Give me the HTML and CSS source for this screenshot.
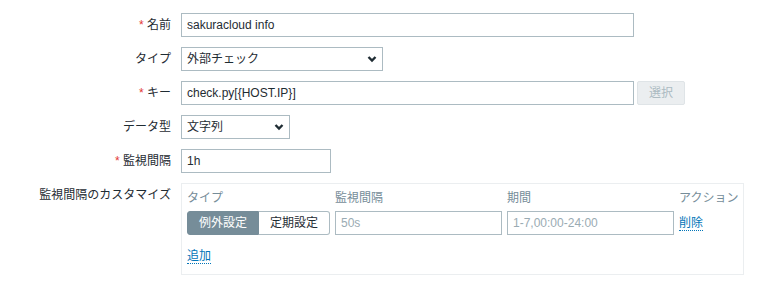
FILE: index.html
```html
<!DOCTYPE html>
<html lang="ja">
<head>
<meta charset="utf-8">
<link rel="stylesheet" href="styles.css">
</head>
<body>
<form class="form">
  <label class="label"><span class="ast">*</span> 名前</label>
  <div class="field"><div class="input w-full">sakuracloud info</div></div>

  <label class="label">タイプ</label>
  <div class="field"><div class="select w-type">外部チェック<svg class="chev" viewBox="0 0 10 8" width="10" height="8"><path d="M1.5 2 L5 5.5 L8.5 2" fill="none" stroke="#1f2c33" stroke-width="2.4"/></svg></div></div>

  <label class="label"><span class="ast">*</span> キー</label>
  <div class="field row"><div class="input w-full">check.py[{HOST.IP}]</div><button type="button" class="btn-disabled">選択</button></div>

  <label class="label">データ型</label>
  <div class="field"><div class="select w-dtype">文字列<svg class="chev" viewBox="0 0 10 8" width="10" height="8"><path d="M1.5 2 L5 5.5 L8.5 2" fill="none" stroke="#1f2c33" stroke-width="2.4"/></svg></div></div>

  <label class="label"><span class="ast">*</span> 監視間隔</label>
  <div class="field"><div class="input w-int">1h</div></div>

  <label class="label label-top">監視間隔のカスタマイズ</label>
  <div class="field">
    <div class="custom">
      <div class="ctable">
        <div class="th">タイプ</div>
        <div class="th">監視間隔</div>
        <div class="th">期間</div>
        <div class="th">アクション</div>

        <div class="seg"><span class="seg-on">例外設定</span><span class="seg-off">定期設定</span></div>
        <div class="input ph">50s</div>
        <div class="input ph">1-7,00:00-24:00</div>
        <div class="act"><a class="link">削除</a></div>
      </div>
      <div class="add"><a class="link">追加</a></div>
    </div>
  </div>
</form>
</body>
</html>
```
FILE: styles.css
```css
html, body {
  margin: 0;
  padding: 0;
  background: #ffffff;
}
body {
  font-family: "Liberation Sans", Arial, "Noto Sans CJK JP", sans-serif;
  font-size: 12px;
  color: #1f2c33;
}
.form {
  display: grid;
  grid-template-columns: 171px auto;
  column-gap: 10px;
  row-gap: 10px;
  padding-top: 13px;
}
.label {
  text-align: right;
  line-height: 24px;
  height: 24px;
  white-space: nowrap;
}
.ast {
  color: #e33734;
}
.field {
  display: flex;
  align-items: flex-start;
}
.row {
  gap: 3px;
}
.input, .select {
  box-sizing: border-box;
  height: 24px;
  border: 1px solid #acbbc2;
  background: #fff;
  padding: 0 5px;
  line-height: 22px;
  white-space: nowrap;
  overflow: hidden;
}
.w-full { width: 453px; }
.w-type { width: 202px; }
.w-dtype { width: 109px; }
.w-int { width: 150px; }
.select {
  display: flex;
  align-items: center;
  justify-content: space-between;
  padding-right: 5px;
}
.chev {
  display: block;
  flex: none;
}
.btn-disabled {
  box-sizing: border-box;
  height: 24px;
  width: 48px;
  border: 1px solid #dfe4e7;
  border-radius: 2px;
  background: #ebeef0;
  color: #acbbc2;
  font: inherit;
  padding: 0;
  line-height: 22px;
}
.custom {
  box-sizing: border-box;
  width: 563px;
  height: 92px;
  border: 1px solid #ebeef0;
  padding: 5px 5px 0 5px;
}
.ctable {
  display: grid;
  grid-template-columns: 143px 167px 167px auto;
  column-gap: 5px;
  row-gap: 4px;
}
.ctable .th {
  color: #768d99;
  line-height: 18px;
  white-space: nowrap;
}
.ph {
  color: #9aabb3;
}
.seg {
  display: flex;
  height: 24px;
}
.seg span {
  box-sizing: border-box;
  height: 24px;
  line-height: 22px;
  text-align: center;
}
.seg-on {
  width: 72px;
  background: #768d99;
  color: #fff;
  border: 1px solid #768d99;
  border-radius: 3px 0 0 3px;
}
.seg-off {
  width: 71px;
  background: #fff;
  border: 1px solid #acbbc2;
  border-left: 0;
  border-radius: 0 3px 3px 0;
}
.act {
  line-height: 24px;
}
.link {
  color: #0275b8;
  text-decoration: none;
  border-bottom: 1px dotted #0275b8;
  cursor: pointer;
}
.add {
  margin-top: 12px;
  line-height: 18px;
}
```
